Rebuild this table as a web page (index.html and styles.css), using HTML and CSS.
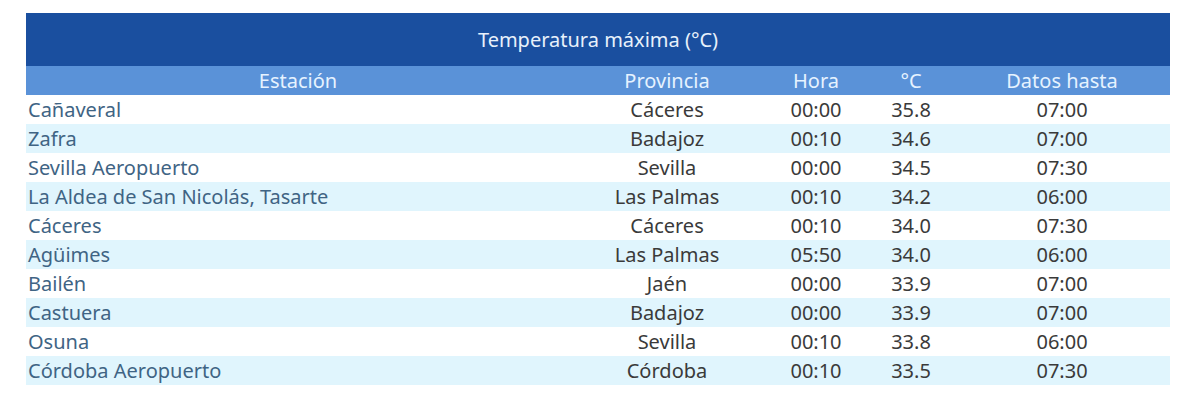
FILE: index.html
```html
<!DOCTYPE html>
<html lang="es">
<head>
<meta charset="utf-8">
<link rel="stylesheet" href="styles.css">
</head>
<body>
<div class="wrap">
<table class="tabla">
  <colgroup>
    <col class="c-est"><col class="c-prov"><col class="c-hora"><col class="c-temp"><col class="c-datos">
  </colgroup>
  <thead>
    <tr class="titulo"><th colspan="5">Temperatura máxima (°C)</th></tr>
    <tr class="cab"><th>Estación</th><th>Provincia</th><th>Hora</th><th>°C</th><th>Datos hasta</th></tr>
  </thead>
  <tbody>
    <tr><td class="est">Cañaveral</td><td>Cáceres</td><td>00:00</td><td>35.8</td><td>07:00</td></tr>
    <tr><td class="est">Zafra</td><td>Badajoz</td><td>00:10</td><td>34.6</td><td>07:00</td></tr>
    <tr><td class="est">Sevilla Aeropuerto</td><td>Sevilla</td><td>00:00</td><td>34.5</td><td>07:30</td></tr>
    <tr><td class="est">La Aldea de San Nicolás, Tasarte</td><td>Las Palmas</td><td>00:10</td><td>34.2</td><td>06:00</td></tr>
    <tr><td class="est">Cáceres</td><td>Cáceres</td><td>00:10</td><td>34.0</td><td>07:30</td></tr>
    <tr><td class="est">Agüimes</td><td>Las Palmas</td><td>05:50</td><td>34.0</td><td>06:00</td></tr>
    <tr><td class="est">Bailén</td><td>Jaén</td><td>00:00</td><td>33.9</td><td>07:00</td></tr>
    <tr><td class="est">Castuera</td><td>Badajoz</td><td>00:00</td><td>33.9</td><td>07:00</td></tr>
    <tr><td class="est">Osuna</td><td>Sevilla</td><td>00:10</td><td>33.8</td><td>06:00</td></tr>
    <tr><td class="est">Córdoba Aeropuerto</td><td>Córdoba</td><td>00:10</td><td>33.5</td><td>07:30</td></tr>
  </tbody>
</table>
</div>
</body>
</html>
```
FILE: styles.css
```css
html, body {
  margin: 0;
  padding: 0;
  background: #ffffff;
}
.wrap {
  padding: 13px 30px 0 26px;
}
.tabla {
  width: 1144px;
  border-collapse: collapse;
  table-layout: fixed;
  font-family: "Noto Sans", "Open Sans", sans-serif;
  font-size: 20px;
  color: #3a3a3a;
}
.c-est { width: 544px; }
.c-prov { width: 194px; }
.c-hora { width: 104px; }
.c-temp { width: 86px; }
.c-datos { width: 216px; }
.tabla th, .tabla td {
  padding: 0;
  text-align: center;
  font-weight: normal;
  white-space: nowrap;
  overflow: hidden;
}
.titulo th {
  background: #1a4f9f;
  color: #e8f1fb;
  height: 53px;
  line-height: 53px;
  font-size: 20px;
}
.cab th {
  background: #5a92d8;
  color: #e6f3ff;
  height: 29px;
  font-size: 20px;
  line-height: 29px;
}
.tabla tbody td {
  height: 29px;
  line-height: 29px;
}
.tabla tbody tr:nth-child(even) td {
  background: #e0f5fd;
}
.tabla td.est {
  text-align: left;
  padding-left: 2px;
  color: #3f6484;
}
```
